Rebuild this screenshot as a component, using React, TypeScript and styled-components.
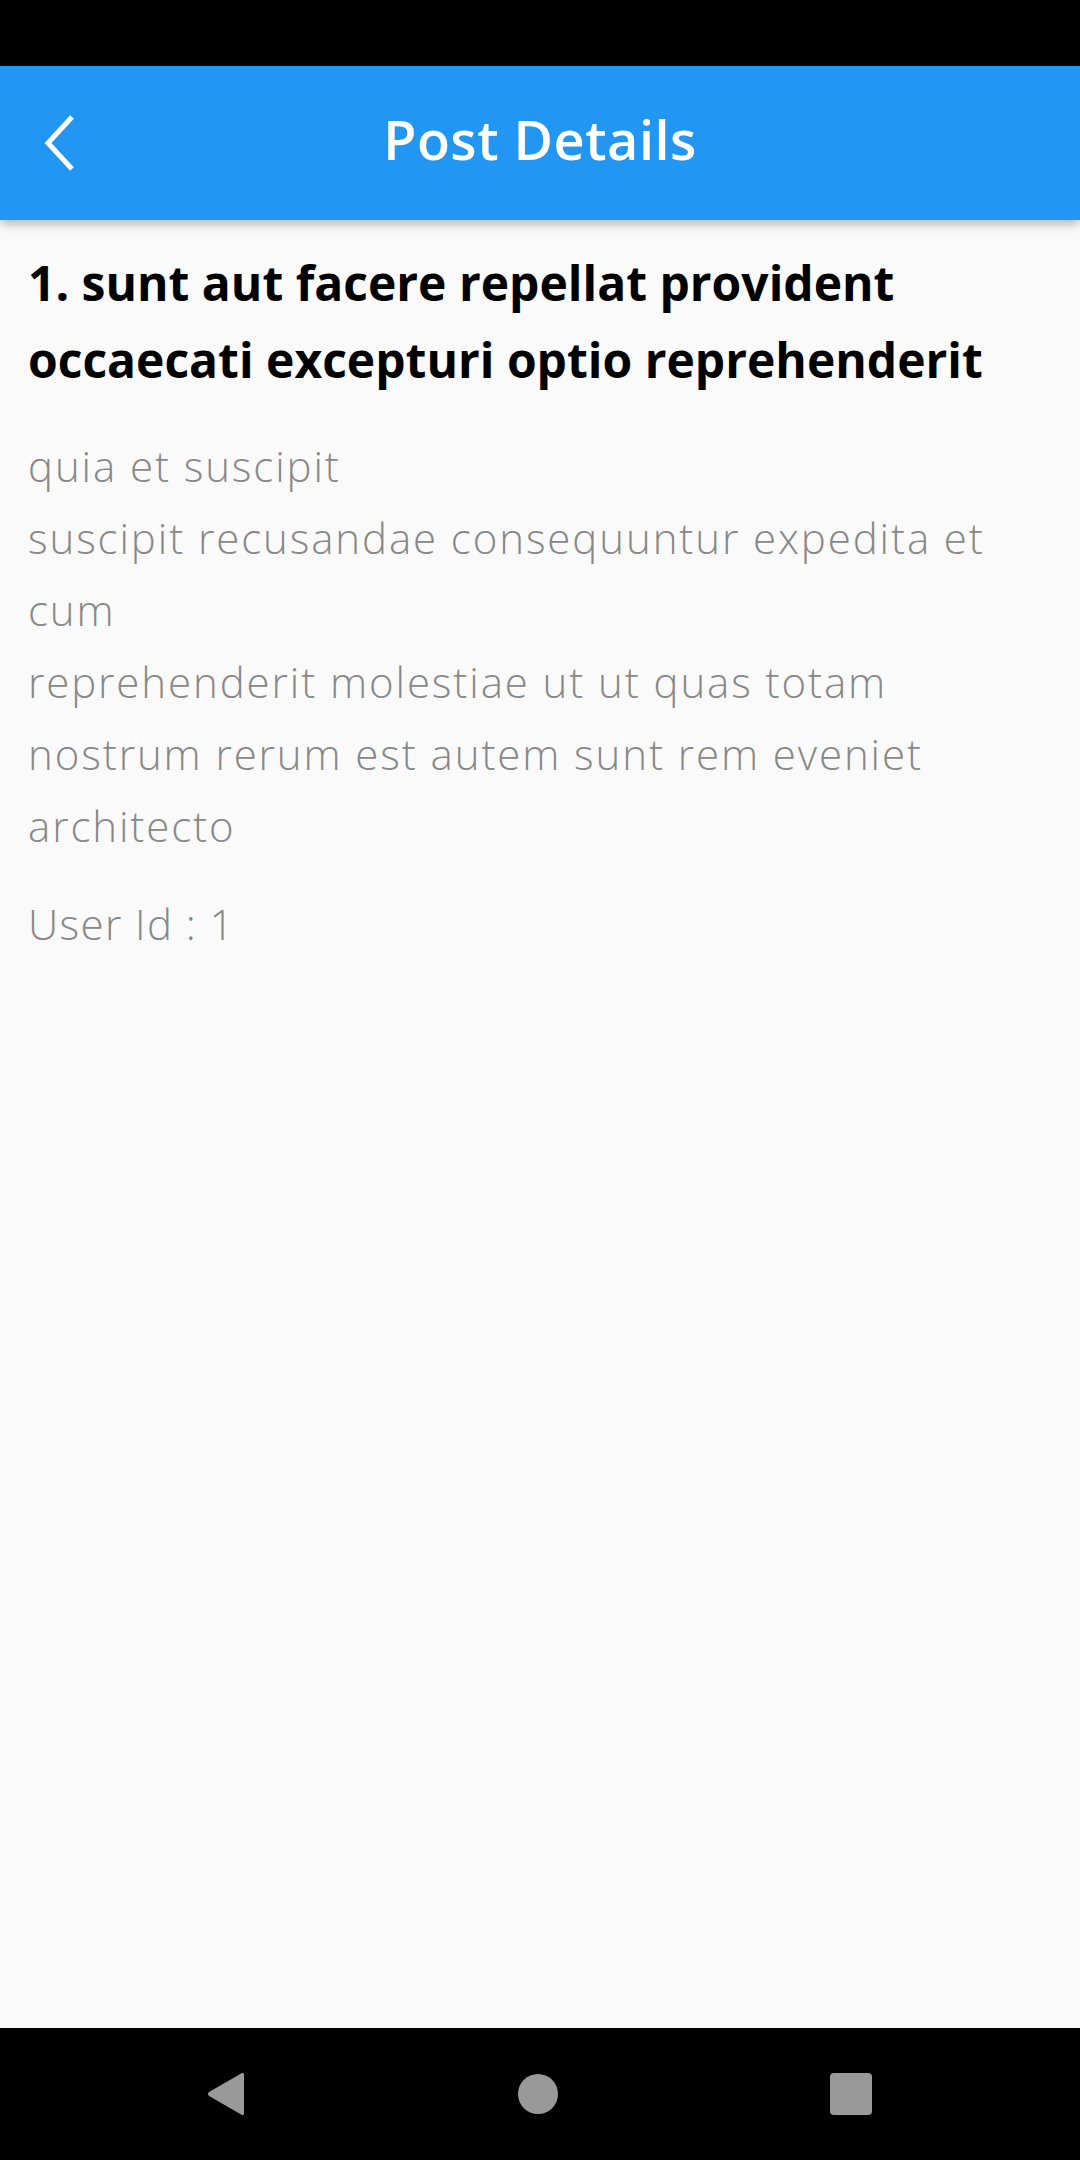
import React from "react";
import styled, { createGlobalStyle } from "styled-components";

const Global = createGlobalStyle`
  html, body { margin: 0; padding: 0; background: #000; }
  #root { width: 1080px; height: 2160px; }
`;

const Screen = styled.div`
  width: 1080px;
  height: 2160px;
  display: flex;
  flex-direction: column;
  background: #fafafa;
  font-family: "Open Sans", "Noto Sans", sans-serif;
  overflow: hidden;
`;

const StatusBar = styled.div`
  height: 66px;
  flex: none;
  background: #000;
`;

const AppBar = styled.header`
  height: 154px;
  flex: none;
  background: #2196f3;
  display: flex;
  align-items: center;
  position: relative;
  z-index: 1;
  box-shadow: 0 4px 10px rgba(0, 0, 0, 0.28);
`;

const BackButton = styled.button`
  width: 120px;
  height: 154px;
  border: 0;
  background: transparent;
  padding: 0 0 0 42px;
  display: flex;
  align-items: center;
  flex: none;
`;

const Title = styled.h1`
  flex: 1;
  margin: 0 120px 8px 0;
  text-align: center;
  color: #fff;
  font-size: 54px;
  font-weight: 600;
  letter-spacing: 0.5px;
`;

const Content = styled.main`
  flex: 1;
  padding: 24px 28px 0;
  display: flex;
  flex-direction: column;
`;

const PostTitle = styled.h2`
  margin: 0;
  font-size: 48px;
  line-height: 77px;
  font-weight: 700;
  color: #000;
`;

const Body = styled.p`
  margin: 32px 0 0;
  font-size: 42px;
  line-height: 72px;
  font-weight: 300;
  letter-spacing: 1.9px;
  color: #888;
  white-space: pre-line;
`;

const Meta = styled.p`
  margin: 26px 0 0;
  font-size: 42px;
  line-height: 72px;
  font-weight: 300;
  letter-spacing: 1.4px;
  color: #888;
`;

const NavBar = styled.nav`
  height: 132px;
  flex: none;
  background: #000;
  display: flex;
  align-items: center;
  justify-content: space-between;
  padding: 0 208px 0 206px;
`;

const NavIcon = styled.svg`
  display: block;
`;

export default function App() {
  const body =
    "quia et suscipit\nsuscipit recusandae consequuntur expedita et cum\nreprehenderit molestiae ut ut quas totam\nnostrum rerum est autem sunt rem eveniet architecto";
  return (
    <>
      <Global />
      <Screen>
        <StatusBar />
        <AppBar>
          <BackButton aria-label="Back">
            <svg width="34" height="58" viewBox="0 0 34 58">
              <path d="M30 3 L6 29 L30 55" stroke="#fff" strokeWidth="5" fill="none" strokeLinejoin="miter" />
            </svg>
          </BackButton>
          <Title>Post Details</Title>
        </AppBar>
        <Content>
          <PostTitle>1. sunt aut facere repellat provident occaecati excepturi optio reprehenderit</PostTitle>
          <Body>{body}</Body>
          <Meta>User Id : 1</Meta>
        </Content>
        <NavBar>
          <NavIcon width="40" height="46" viewBox="0 0 40 46">
            <path d="M36 2 Q38 1 38 4 L38 42 Q38 45 36 44 L3 25 Q1 23 3 21 Z" fill="#999" />
          </NavIcon>
          <NavIcon width="42" height="42" viewBox="0 0 42 42">
            <circle cx="21" cy="21" r="20" fill="#999" />
          </NavIcon>
          <NavIcon width="42" height="42" viewBox="0 0 42 42">
            <rect x="0" y="0" width="42" height="42" rx="4" fill="#999" />
          </NavIcon>
        </NavBar>
      </Screen>
    </>
  );
}
